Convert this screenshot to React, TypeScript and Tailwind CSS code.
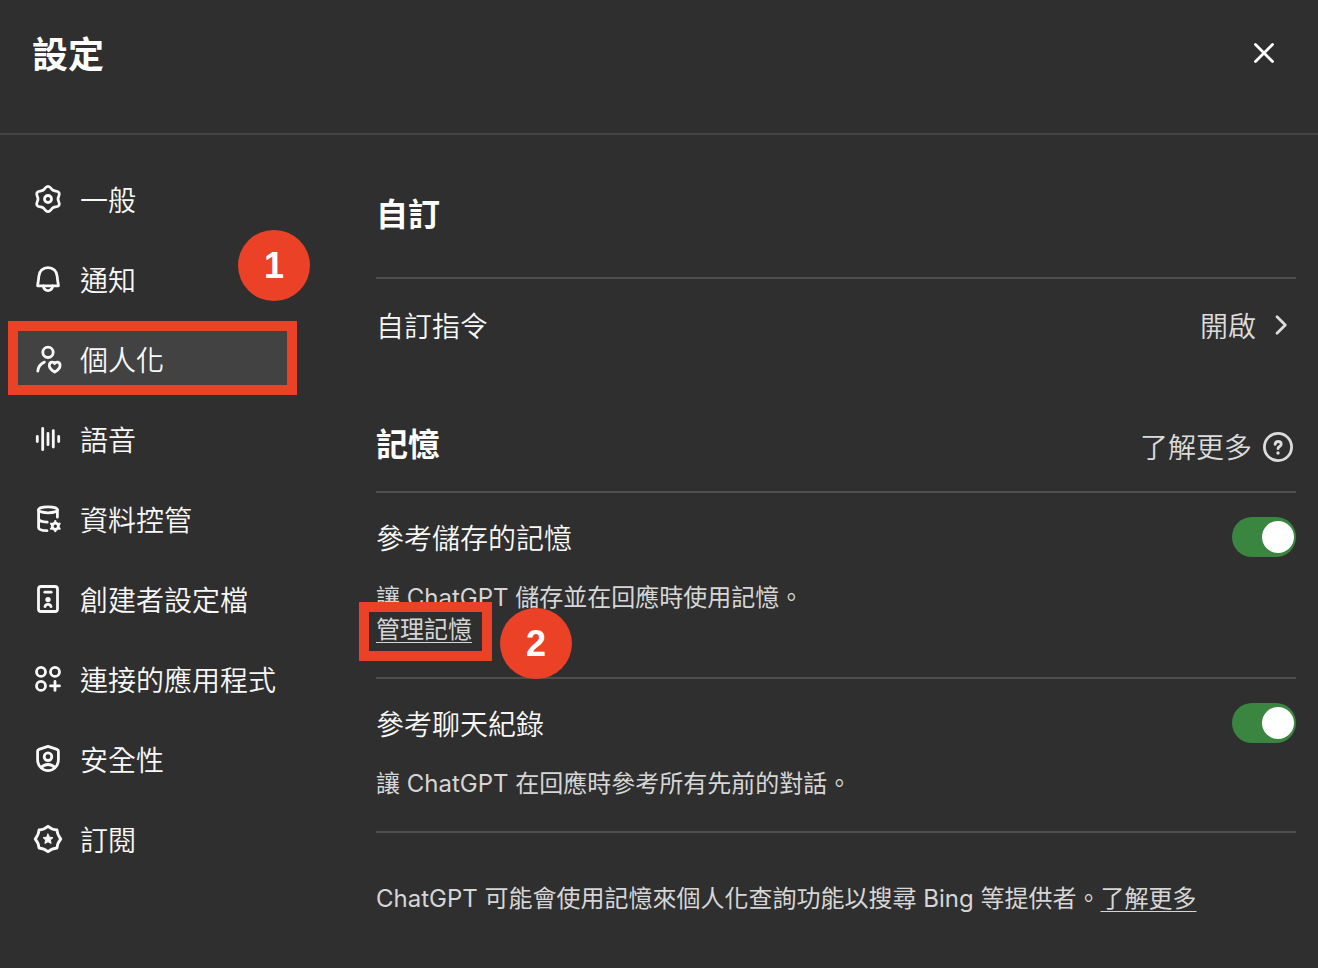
import { useState } from 'react';
import type { ReactNode } from 'react';

interface NavItem {
  id: string;
  label: string;
  icon: ReactNode;
}

const NAV_ITEMS: NavItem[] = [
  {
    id: 'general',
    label: '一般',
    icon: (
      <>
        <path d="M16 3.3C18.6 3.3 18.8 6 21 7.3 23.2 8.6 25.7 7.4 27 9.65 28.3 11.9 26 13.4 26 16 26 18.6 28.3 20.1 27 22.35 25.7 24.6 23.2 23.4 21 24.7 18.8 26 18.6 28.7 16 28.7 13.4 28.7 13.2 26 11 24.7 8.8 23.4 6.3 24.6 5 22.35 3.7 20.1 6 18.6 6 16 6 13.4 3.7 11.9 5 9.65 6.3 7.4 8.8 8.6 11 7.3 13.2 6 13.4 3.3 16 3.3Z" />
        <circle cx="16" cy="16" r="3.5" />
      </>
    ),
  },
  {
    id: 'notifications',
    label: '通知',
    icon: (
      <>
        <path d="M5.6 22.8C5.6 20.8 6.6 18 6.8 13.5 7 8.3 11 4.6 16 4.6s9 3.7 9.2 8.9c.2 4.5 1.2 7.3 1.2 9.3Z" />
        <path d="M11.2 23c.6 2.8 2.6 4.6 4.8 4.6s4.2-1.8 4.8-4.6" />
      </>
    ),
  },
  {
    id: 'personalization',
    label: '個人化',
    icon: (
      <>
        <circle cx="16" cy="9.3" r="5.2" />
        <path d="M5.8 28.2c.5-4.2 3.2-7.7 6.6-9.1" />
        <path d="M22.7 29c-2.6-1.5-5.4-3.7-5.4-6.5 0-2 1.3-3.4 3-3.4 1 0 1.9.5 2.4 1.4.5-.9 1.4-1.4 2.4-1.4 1.7 0 3 1.4 3 3.4 0 2.8-2.8 5-5.4 6.5Z" />
      </>
    ),
  },
  {
    id: 'voice',
    label: '語音',
    icon: <path d="M5.3 13.5v5M10.7 5.3v21.4M16 10.3v11.4M21.3 7.6v16.4M26.7 13.5v5" />,
  },
  {
    id: 'data',
    label: '資料控管',
    icon: (
      <>
        <ellipse cx="16" cy="6.8" rx="9.4" ry="3" />
        <path d="M6.6 6.8v17.6c0 1.9 3.4 3.1 8.4 3.3M6.6 15.8c0 1.9 3.6 3.2 8.6 3.3M25.4 6.8v7.4" />
        <circle cx="23.3" cy="23.2" r="3.1" />
        <path strokeWidth="2.2" d="M23.3 20v-1.8M23.3 28.2v-1.8M26.1 21.6l1.5-.9M19 25.7l1.5-.9M26.1 24.8l1.5.9M19 20.7l1.5.9" />
      </>
    ),
  },
  {
    id: 'builder',
    label: '創建者設定檔',
    icon: (
      <>
        <rect x="6.5" y="3.5" width="19" height="25" rx="2.6" />
        <path d="M12.8 9.2h6.4" />
        <circle cx="16" cy="16.6" r="2.7" fill="currentColor" stroke="none" />
        <path d="M13 23.6c.2-1.5 1.4-2.3 3-2.3s2.8.8 3 2.3" />
      </>
    ),
  },
  {
    id: 'apps',
    label: '連接的應用程式',
    icon: (
      <>
        <circle cx="9" cy="8.9" r="4.5" />
        <circle cx="23" cy="8.9" r="4.5" />
        <circle cx="9" cy="22.9" r="4.5" />
        <path d="M23 18.4v9M18.5 22.9h9" />
      </>
    ),
  },
  {
    id: 'security',
    label: '安全性',
    icon: (
      <>
        <path d="M16 3.3 25 6.3c.9.3 1.4 1 1.4 1.9v8.2c0 7-5.2 11.2-10.4 11.2S5.6 23.4 5.6 16.4V8.2c0-.9.5-1.6 1.4-1.9Z" />
        <circle cx="16" cy="13.7" r="3.8" />
        <path d="M9.2 24.6c1.6-2 4-3.1 6.8-3.1s5.2 1.1 6.8 3.1" />
      </>
    ),
  },
  {
    id: 'subscription',
    label: '訂閱',
    icon: (
      <>
        <path d="M16 3.2Q19.9 6.6 25 7 25.4 12.1 28.8 16 25.4 19.9 25 25 19.9 25.4 16 28.8 12.1 25.4 7 25 6.6 19.9 3.2 16 6.6 12.1 7 7 12.1 6.6 16 3.2Z" />
        <path
          fill="currentColor"
          strokeWidth="1"
          d="M16 11l1.5 3.2 3.5.4-2.6 2.4.7 3.5-3.1-1.7-3.1 1.7.7-3.5L11 14.6l3.5-.4Z"
        />
      </>
    ),
  },
];

function Icon({ children }: { children: ReactNode }) {
  return (
    <svg
      viewBox="0 0 32 32"
      className="size-8 shrink-0"
      fill="none"
      stroke="currentColor"
      strokeWidth="2.8"
      strokeLinecap="round"
      strokeLinejoin="round"
      aria-hidden="true"
    >
      {children}
    </svg>
  );
}

function StepBadge({ step, className }: { step: number; className: string }) {
  return (
    <span
      className={`absolute z-20 flex h-[71px] w-[72px] items-center justify-center rounded-full bg-[#eb4127] font-['Liberation_Sans',sans-serif] text-4xl font-bold text-white ${className}`}
    >
      {step}
    </span>
  );
}

interface ToggleRowProps {
  id: string;
  label: string;
  children: ReactNode;
}

function ToggleRow({ id, label, children }: ToggleRowProps) {
  const [on, setOn] = useState(true);

  return (
    <div className="border-b-2 border-[#4e4e4e] pt-6 pb-[31px]">
      <div className="flex items-start justify-between">
        <label htmlFor={id} className="text-[28px] leading-[44px]">
          {label}
        </label>
        <input
          id={id}
          type="checkbox"
          role="switch"
          checked={on}
          onChange={(e) => setOn(e.target.checked)}
          className="h-10 w-16 shrink-0 cursor-pointer appearance-none rounded-full bg-[#6b6b6b] p-1 transition-colors before:block before:size-8 before:rounded-full before:bg-white checked:bg-[#3a8540] checked:pr-0.5 checked:before:ml-auto"
        />
      </div>
      <div className="mt-[21px] text-2xl leading-8 font-normal text-[#d6d6d6]">{children}</div>
    </div>
  );
}

export default function App() {
  const [active, setActive] = useState('personalization');

  return (
    <div
      lang="zh-Hant"
      className="min-h-screen bg-[#2f2f2f] font-['Inter','Noto_Sans_CJK_TC',sans-serif] font-[350] text-[#f8f8f8]"
    >
      <header className="flex items-start justify-between border-b-2 border-[#444444] px-8 pt-8 pb-[54px]">
        <h1 className="text-4xl leading-[47px] font-semibold text-white">設定</h1>
        <button type="button" aria-label="關閉" className="mt-[5px] mr-1.5 text-white">
          <Icon>
            <path d="M7.5 7.5l17 17M24.5 7.5l-17 17" />
          </Icon>
        </button>
      </header>

      <div className="flex">
        <nav className="flex w-[292px] shrink-0 flex-col gap-4 pt-8 pl-4">
          {NAV_ITEMS.map((item) => (
            <div key={item.id} className="relative">
              <button
                type="button"
                onClick={() => setActive(item.id)}
                className={`flex h-16 w-full items-center gap-4 pl-4 text-left text-[28px] ${
                  active === item.id ? 'bg-[#424242]' : ''
                }`}
              >
                <Icon>{item.icon}</Icon>
                <span className="pt-1 leading-10">{item.label}</span>
              </button>
              {item.id === 'personalization' && (
                <>
                  <span className="pointer-events-none absolute -top-1.5 -right-[5px] -bottom-1 -left-2 border-10 border-[#eb4127]" />
                  <StepBadge step={1} className="-top-[97px] left-[222px]" />
                </>
              )}
            </div>
          ))}
        </nav>

        <main className="ml-[84px] min-w-0 flex-1 pt-15 pr-[22px] pb-12">
          <section>
            <h2 className="border-b-2 border-[#4e4e4e] pb-[42px] text-[32px] leading-10 font-semibold text-white">自訂</h2>
            <div className="flex items-center justify-between pt-[26px] text-[28px] leading-[44px]">
              <span>自訂指令</span>
              <button type="button" className="flex items-start gap-2 text-[#dcdcdc]">
                開啟
                <span className="pt-1">
                  <Icon>
                    <path d="M13 7.7l8.3 8.3-8.3 8.3" />
                  </Icon>
                </span>
              </button>
            </div>
          </section>

          <section className="mt-[74px]">
            <div className="flex items-start justify-between border-b-2 border-[#4e4e4e] pb-[21px]">
              <h2 className="text-[32px] leading-[44px] font-semibold text-white">記憶</h2>
              <a href="#memory" className="flex items-center gap-2.5 pr-0.5 text-[28px] text-[#dcdcdc]">
                <span className="pt-1 leading-[43px]">了解更多</span>
                <Icon>
                  <circle cx="16" cy="16" r="13.6" />
                  <path d="M13.1 13.4c.2-1.8 1.4-2.9 3.1-2.9s3 1.1 3 2.7c0 2.3-3.2 2.3-3.2 4.500" />
                  <circle cx="16" cy="22" r="1.7" fill="currentColor" stroke="none" />
                </Icon>
              </a>
            </div>

            <ToggleRow id="saved-memories" label="參考儲存的記憶">
              <p>讓 ChatGPT 儲存並在回應時使用記憶。</p>
              <div className="relative w-fit">
                <a href="#manage" className="underline decoration-1 underline-offset-4">
                  管理記憶
                </a>
                <span className="pointer-events-none absolute -top-3 -right-5 -bottom-[15px] -left-[17px] border-10 border-[#eb4127]" />
                <StepBadge step={2} className="-top-1.5 left-[124px]" />
              </div>
            </ToggleRow>

            <ToggleRow id="chat-history" label="參考聊天紀錄">
              <p>讓 ChatGPT 在回應時參考所有先前的對話。</p>
            </ToggleRow>
          </section>

          <p className="pt-[50px] text-2xl leading-8 font-normal text-[#d6d6d6]">
            ChatGPT 可能會使用記憶來個人化查詢功能以搜尋 Bing 等提供者。
            <a href="#bing" className="underline decoration-1 underline-offset-4">
              了解更多
            </a>
          </p>
        </main>
      </div>
    </div>
  );
}
